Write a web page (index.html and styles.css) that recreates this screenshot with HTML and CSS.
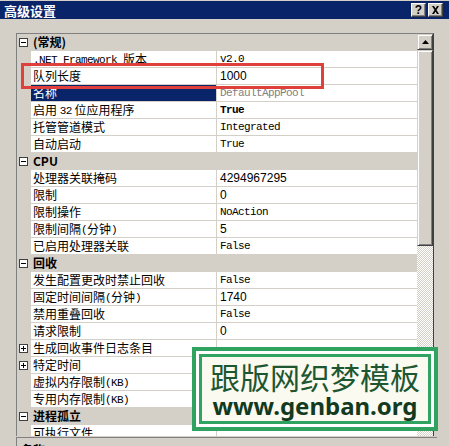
FILE: index.html
```html
<!DOCTYPE html>
<html lang="zh-CN">
<head>
<meta charset="UTF-8">
<title>高级设置</title>
<link rel="stylesheet" href="styles.css">
</head>
<body>

<div class="window">
    <!-- Title bar -->
    <div class="titlebar">
        <span class="title">高级设置</span>
        <div class="caption-buttons">
            <span class="cap-btn">?</span>
            <span class="cap-btn">
                <svg width="9" height="8" viewBox="0 0 9 8"><path d="M1 0h2l1.5 2.5L6 0h2L5.5 4L8 8H6L4.5 5.5L3 8H1l2.5-4z" fill="#000"/></svg>
            </span>
        </div>
    </div>

    <!-- Property grid -->
    <div class="grid">
        <div class="rows">
            <div class="row category">
                <span class="gutter"><span class="toggle minus"></span></span>
                <span class="name">(常规)</span>
            </div>
            <div class="row">
                <span class="gutter"></span>
                <span class="name"><span class="en">.NET Framework </span>版本</span>
                <span class="value">v2.0</span>
            </div>
            <div class="row">
                <span class="gutter"></span>
                <span class="name">队列长度</span>
                <span class="value sans">1000</span>
            </div>
            <div class="row selected">
                <span class="gutter"></span>
                <span class="name">名称</span>
                <span class="value muted">DefaultAppPool</span>
            </div>
            <div class="row">
                <span class="gutter"></span>
                <span class="name">启用 <span class="en">32</span> 位应用程序</span>
                <span class="value bold">True</span>
            </div>
            <div class="row">
                <span class="gutter"></span>
                <span class="name">托管管道模式</span>
                <span class="value">Integrated</span>
            </div>
            <div class="row">
                <span class="gutter"></span>
                <span class="name">自动启动</span>
                <span class="value">True</span>
            </div>
            <div class="row category">
                <span class="gutter"><span class="toggle minus"></span></span>
                <span class="name">CPU</span>
            </div>
            <div class="row">
                <span class="gutter"></span>
                <span class="name">处理器关联掩码</span>
                <span class="value sans">4294967295</span>
            </div>
            <div class="row">
                <span class="gutter"></span>
                <span class="name">限制</span>
                <span class="value sans">0</span>
            </div>
            <div class="row">
                <span class="gutter"></span>
                <span class="name">限制操作</span>
                <span class="value">NoAction</span>
            </div>
            <div class="row">
                <span class="gutter"></span>
                <span class="name">限制间隔<span class="en">(</span>分钟<span class="en">)</span></span>
                <span class="value sans">5</span>
            </div>
            <div class="row">
                <span class="gutter"></span>
                <span class="name">已启用处理器关联</span>
                <span class="value">False</span>
            </div>
            <div class="row category">
                <span class="gutter"><span class="toggle minus"></span></span>
                <span class="name">回收</span>
            </div>
            <div class="row">
                <span class="gutter"></span>
                <span class="name">发生配置更改时禁止回收</span>
                <span class="value">False</span>
            </div>
            <div class="row">
                <span class="gutter"></span>
                <span class="name">固定时间间隔<span class="en">(</span>分钟<span class="en">)</span></span>
                <span class="value sans">1740</span>
            </div>
            <div class="row">
                <span class="gutter"></span>
                <span class="name">禁用重叠回收</span>
                <span class="value">False</span>
            </div>
            <div class="row">
                <span class="gutter"></span>
                <span class="name">请求限制</span>
                <span class="value sans">0</span>
            </div>
            <div class="row">
                <span class="gutter"><span class="toggle plus"></span></span>
                <span class="name">生成回收事件日志条目</span>
                <span class="value"></span>
            </div>
            <div class="row">
                <span class="gutter"><span class="toggle plus"></span></span>
                <span class="name">特定时间</span>
                <span class="value"></span>
            </div>
            <div class="row">
                <span class="gutter"></span>
                <span class="name">虚拟内存限制<span class="en">(KB)</span></span>
                <span class="value"></span>
            </div>
            <div class="row">
                <span class="gutter"></span>
                <span class="name">专用内存限制<span class="en">(KB)</span></span>
                <span class="value"></span>
            </div>
            <div class="row category">
                <span class="gutter"><span class="toggle minus"></span></span>
                <span class="name">进程孤立</span>
            </div>
            <div class="row">
                <span class="gutter"></span>
                <span class="name">可执行文件</span>
                <span class="value"></span>
            </div>
        </div>

        <!-- Vertical scrollbar -->
        <div class="scrollbar">
            <div class="sb-button">
                <svg width="7" height="4" viewBox="0 0 7 4"><path d="M3.5 0L7 4H0z" fill="#000"/></svg>
            </div>
            <div class="sb-thumb"></div>
            <div class="sb-track"></div>
        </div>

        <!-- Highlight around 队列长度 -->
        <div class="highlight"></div>
    </div>

    <!-- Description panel -->
    <div class="desc">
        <span class="desc-title">名称</span>
    </div>

    <!-- Watermark -->
    <div class="stamp">
        <div class="stamp-inner">
            <span class="stamp-cn">跟版网织梦模板</span>
            <span class="stamp-url">www.genban.org</span>
        </div>
    </div>
</div>

</body>
</html>
```

FILE: styles.css
```css
body {
    margin: 0;
    background-color: #d4d0c8;
    font-family: "Noto Sans CJK SC", "Liberation Sans", sans-serif;
    font-size: 12px;
    color: #000;
}

.window {
    position: relative;
    width: 449px;
    height: 446px;
    overflow: hidden;
    background-color: #d4d0c8;
}

/* Title bar */
.titlebar {
    display: flex;
    justify-content: space-between;
    align-items: center;
    height: 18px;
    margin-top: 1px;
    padding: 0 6px 0 4px;
    background-color: #0a246a;
}

.title {
    color: #fff;
    font-weight: bold;
    font-size: 13px;
    line-height: 18px;
    padding-top: 2px;
}

.caption-buttons {
    display: flex;
    gap: 2px;
}

.cap-btn {
    display: flex;
    align-items: center;
    justify-content: center;
    width: 13px;
    height: 12px;
    background-color: #d4d0c8;
    border-top: 1px solid #fff;
    border-left: 1px solid #fff;
    border-right: 1px solid #404040;
    border-bottom: 1px solid #404040;
    box-shadow: inset -1px -1px 0 #808080;
    font-family: "Liberation Sans", sans-serif;
    font-weight: bold;
    font-size: 12px;
    line-height: 12px;
}

/* Property grid */
.grid {
    position: relative;
    display: flex;
    width: 416px;
    height: 402px;
    margin: 14px 0 0 16px;
    border-top: 1px solid #808080;
    border-left: 1px solid #808080;
    border-right: 1px solid #404040;
    background-color: #fff;
}

.rows {
    width: 400px;
    overflow: hidden;
}

.row {
    display: flex;
    height: 17px;
}

.gutter {
    display: flex;
    align-items: center;
    width: 14px;
    flex-shrink: 0;
    background-color: #d4d0c8;
}

.name {
    width: 183px;
    padding-left: 2px;
    border-right: 1px solid #d4d0c8;
    border-bottom: 1px solid #d4d0c8;
    line-height: 16px;
    white-space: nowrap;
}

.value {
    flex: 1;
    padding-left: 3px;
    border-bottom: 1px solid #d4d0c8;
    font-family: "Liberation Mono", monospace;
    font-size: 11px;
    letter-spacing: -0.6px;
    line-height: 16px;
    white-space: nowrap;
}

.en {
    font-family: "Liberation Mono", monospace;
    font-size: 11px;
    letter-spacing: -0.6px;
    vertical-align: 1px;
}

.value.sans {
    font-family: "Liberation Sans", sans-serif;
    font-size: 12px;
    letter-spacing: 0;
}

.value.bold {
    font-weight: bold;
}

.value.muted {
    color: #808080;
}

.row.category .name {
    flex: 1;
    background-color: #d4d0c8;
    border-right: none;
    font-weight: bold;
}

.row.selected .name {
    background-color: #0a246a;
    color: #fff;
}

/* Expand / collapse boxes */
.toggle {
    position: relative;
    width: 7px;
    height: 7px;
    margin-left: 2px;
    border: 1px solid #404040;
    background-color: #fff;
}

.toggle::before {
    content: "";
    position: absolute;
    left: 1px;
    top: 3px;
    width: 5px;
    height: 1px;
    background-color: #000;
}

.toggle.plus::after {
    content: "";
    position: absolute;
    left: 3px;
    top: 1px;
    width: 1px;
    height: 5px;
    background-color: #000;
}

/* Scrollbar */
.scrollbar {
    display: flex;
    flex-direction: column;
    width: 16px;
}

.sb-button,
.sb-thumb {
    box-sizing: border-box;
    background-color: #d4d0c8;
    border-top: 1px solid #d4d0c8;
    border-left: 1px solid #d4d0c8;
    border-right: 1px solid #404040;
    border-bottom: 1px solid #404040;
    box-shadow: inset 1px 1px 0 #fff, inset -1px -1px 0 #808080;
}

.sb-button {
    display: flex;
    align-items: center;
    justify-content: center;
    height: 16px;
}

.sb-thumb {
    height: 196px;
}

.sb-track {
    flex: 1;
    background: repeating-conic-gradient(#fff 0 25%, #d4d0c8 0 50%) 0 0 / 2px 2px;
}

.highlight {
    position: absolute;
    left: 4px;
    top: 29px;
    width: 297px;
    height: 20px;
    border: 3px solid #e0403c;
}

/* Description panel */
.desc {
    margin: 1px 0 0 16px;
    width: 416px;
    height: 20px;
    border-top: 1px solid #808080;
    border-left: 1px solid #808080;
    padding: 3px 0 0 4px;
}

.desc-title {
    font-weight: bold;
}

/* Watermark */
.stamp {
    position: absolute;
    left: 192px;
    top: 347px;
    width: 232px;
    height: 70px;
    padding: 3px;
    border: 4px solid #2fa35f;
    background-color: #fff;
}

.stamp-inner {
    display: flex;
    flex-direction: column;
    align-items: center;
    justify-content: center;
    gap: 3px;
    height: 100%;
    box-sizing: border-box;
    border: 3px solid #2fa35f;
    background-color: #fbfaf0;
}

.stamp-cn {
    font-size: 30px;
    line-height: 30px;
    color: #1d5631;
}

.stamp-url {
    font-family: "Noto Sans", sans-serif;
    font-weight: bold;
    font-size: 24px;
    line-height: 24px;
    color: #123a20;
}
```
